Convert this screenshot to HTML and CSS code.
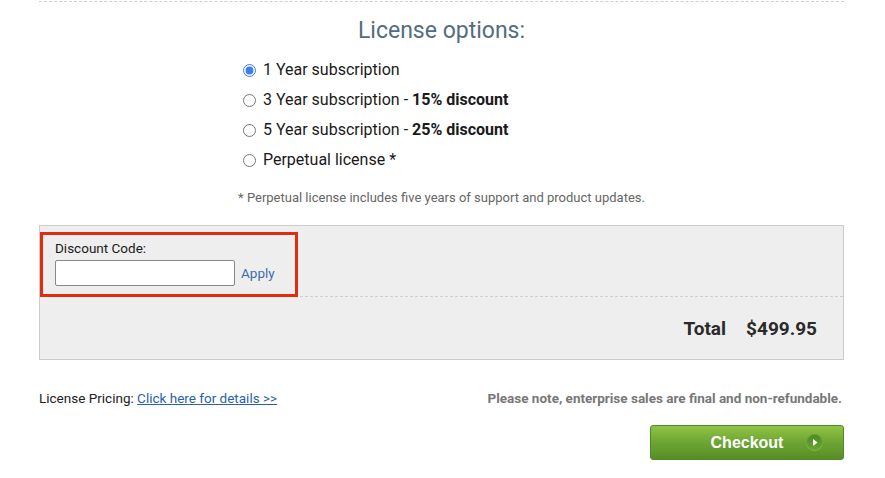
FILE: index.html
```html
<!DOCTYPE html>
<html>
<head>
<meta charset="utf-8">
<link rel="stylesheet" href="styles.css">
</head>
<body>
<div class="wrap">
  <h2 class="title">License options:</h2>
  <div class="options">
    <label class="opt"><input type="radio" name="lic" checked> 1 Year subscription</label>
    <label class="opt"><input type="radio" name="lic"> 3 Year subscription - <b>15% discount</b></label>
    <label class="opt"><input type="radio" name="lic"> 5 Year subscription - <b>25% discount</b></label>
    <label class="opt"><input type="radio" name="lic"> Perpetual license *</label>
  </div>
  <p class="note">* Perpetual license includes five years of support and product updates.</p>
  <div class="summary">
    <div class="discount-row">
      <div class="discount">
        <div class="dlabel">Discount Code:</div>
        <div class="dfield"><input type="text" class="dinput"><a href="#" class="apply">Apply</a></div>
      </div>
    </div>
    <div class="total-row">
      <span class="total-label">Total</span>
      <span class="total-value">$499.95</span>
    </div>
  </div>
  <div class="footer">
    <div class="pricing">License Pricing: <a href="#">Click here for details &gt;&gt;</a></div>
    <div class="final">Please note, enterprise sales are final and non-refundable.</div>
  </div>
  <div class="actions">
    <button class="checkout">Checkout<span class="arrow"><svg width="17" height="17" viewBox="0 0 17 17"><polygon points="7,5 11.5,8.5 7,12" fill="#fff"/></svg></span></button>
  </div>
</div>
</body>
</html>
```
FILE: styles.css
```css
* { box-sizing: border-box; }
body { margin: 0; background: #fff; font-family: Roboto, "Liberation Sans", Arial, sans-serif; color: #1a1a1a; }
.wrap { width: 805px; margin-left: 39px; border-top: 1px dashed #d0d0d0; margin-top: 1px; }
.title { margin: 15px 0 0; font-size: 23px; line-height: 28px; font-weight: 400; color: #536d80; text-align: center; }
.options { display: flex; flex-direction: column; margin: 10px 0 0 203px; }
.opt { display: flex; align-items: center; font-size: 16px; line-height: 30px; height: 30px; white-space: pre; }
.opt input { margin: 0 3px 0 1px; width: 13px; height: 13px; accent-color: #3b7cf5; }
.opt b { font-weight: 700; }
.note { margin: 14px 0 0; font-size: 13px; line-height: 18px; color: #666; text-align: center; }
.summary { margin-top: 18px; background: #eeeeee; border: 1px solid #cccccc; }
.discount-row { padding-top: 6px; border-bottom: 1px dashed #cfcfcf; display: flex; }
.discount { width: 258px; border: 3px solid #de2d10; padding: 5px 12px 8px 12px; margin-bottom: -1px; }
.dlabel { font-size: 13.5px; line-height: 16px; color: #1a1a1a; }
.dfield { display: flex; align-items: center; margin-top: 4px; }
.dinput { width: 180px; height: 26px; border: 1px solid #888; border-radius: 2px; background: #fff; margin: 0; padding: 0 4px; }
.apply { margin-left: 6px; font-size: 13.5px; color: #3b6ea8; text-decoration: none; }
.total-row { height: 62px; display: flex; align-items: center; justify-content: flex-end; padding-right: 26px; gap: 20px; font-weight: 700; font-size: 19px; color: #2a2a2a; }
.footer { display: flex; justify-content: space-between; align-items: center; margin-top: 30px; font-size: 13.5px; line-height: 16px; }
.pricing { color: #222; }
.pricing a { color: #2a5fae; text-decoration: underline; }
.final { color: #777; font-weight: 700; padding-right: 2px; }
.actions { display: flex; justify-content: flex-end; margin-top: 19px; }
.checkout { position: relative; width: 194px; height: 35px; border: 1px solid #4f8a26; border-radius: 3px; background: linear-gradient(#8fc444, #6aa232 55%, #568e26); color: #fff; font-family: "Liberation Sans", Arial, sans-serif; font-weight: 700; font-size: 16px; padding: 0; cursor: pointer; }
.arrow { position: absolute; right: 20px; top: 8px; width: 17px; height: 17px; border-radius: 50%; background: linear-gradient(#4d8a20, #6ba735); box-shadow: inset 0 0 0 1px rgba(255,255,255,0.15); display: flex; }
```
